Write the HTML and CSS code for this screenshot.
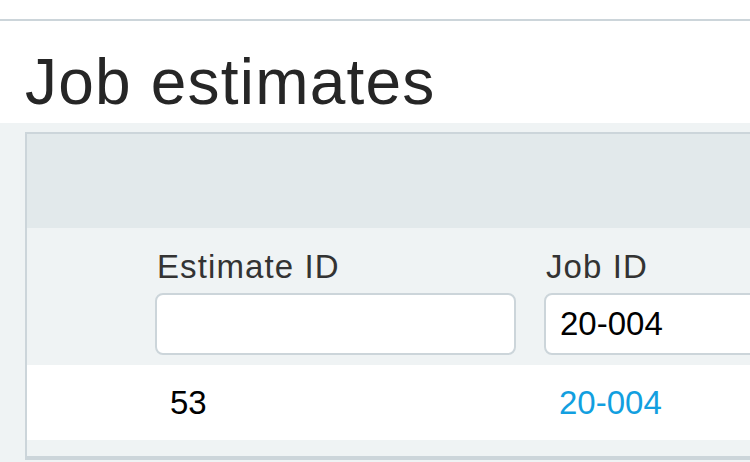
FILE: index.html
```html
<!DOCTYPE html>
<html lang="en">
<head>
    <meta charset="UTF-8">
    <meta name="viewport" content="width=device-width, initial-scale=1.0">
    <title>Job estimates</title>
    <link rel="stylesheet" href="styles.css">
</head>
<body>
    <div class="topbar"></div>

    <div class="page-header">
        <h1>Job estimates</h1>
    </div>

    <div class="content">
        <div class="panel">
            <div class="panel-head"></div>
            <table class="grid">
                <colgroup>
                    <col class="col-select">
                    <col class="col-estimate">
                    <col class="col-job">
                </colgroup>
                <tr class="filters">
                    <td></td>
                    <td class="cell-estimate">
                        <label for="estimateId">Estimate ID</label>
                        <input type="text" id="estimateId">
                    </td>
                    <td>
                        <label for="jobId">Job ID</label>
                        <input type="text" id="jobId" class="input-wide" value="20-004">
                    </td>
                </tr>
                <tr class="row">
                    <td></td>
                    <td>53</td>
                    <td><a href="#">20-004</a></td>
                </tr>
            </table>
            <div class="panel-foot"></div>
        </div>
    </div>
</body>
</html>
```

FILE: styles.css
```css
html, body {
    margin: 0;
}
body {
    font-family: "Liberation Sans", Arial, sans-serif;
    background-color: #fff;
    color: #333;
}
.topbar {
    height: 19px;
    border-bottom: 2px solid #ccd5da;
}
.page-header {
    padding: 29px 0 9px 25px;
}
.page-header h1 {
    margin: 0;
    font-size: 64px;
    line-height: 64px;
    font-weight: normal;
    letter-spacing: 1.2px;
    color: #262626;
}
.content {
    background-color: #eff3f4;
    padding: 9px 0 2px 25px;
}
.panel {
    box-sizing: border-box;
    width: 725px;
    overflow: hidden;
    border-top: 2px solid #ccd5da;
    border-left: 2px solid #ccd5da;
    border-bottom: 4px solid #ccd5da;
    background-color: #eff3f4;
}
.panel-head {
    height: 94px;
    background-color: #e2e9eb;
}
.grid {
    border-collapse: collapse;
    table-layout: fixed;
    width: 723px;
}
.col-select {
    width: 120px;
}
.col-estimate {
    width: 389px;
}
.grid td {
    padding: 0 8px;
}
.filters td {
    padding-top: 20px;
    padding-bottom: 10px;
    vertical-align: top;
}
.filters .cell-estimate {
    padding-right: 20px;
}
.filters label {
    display: block;
    font-size: 33px;
    line-height: 38px;
    letter-spacing: 1.1px;
    padding-left: 2px;
    white-space: nowrap;
    color: #333;
}
.filters input {
    display: block;
    box-sizing: border-box;
    width: 100%;
    height: 62px;
    margin-top: 7px;
    padding: 0 14px;
    border: 2px solid #ccd5da;
    border-radius: 8px;
    background-color: #fff;
    font-family: "Liberation Sans", Arial, sans-serif;
    font-size: 33px;
    color: #000;
    outline: none;
}
.filters .input-wide {
    width: 320px;
}
.row td {
    height: 75px;
    padding: 0 23px;
    background-color: #fff;
    font-size: 33px;
    color: #000;
    vertical-align: middle;
}
.row a {
    color: #129fe0;
    text-decoration: none;
}
.panel-foot {
    height: 16px;
}
```
